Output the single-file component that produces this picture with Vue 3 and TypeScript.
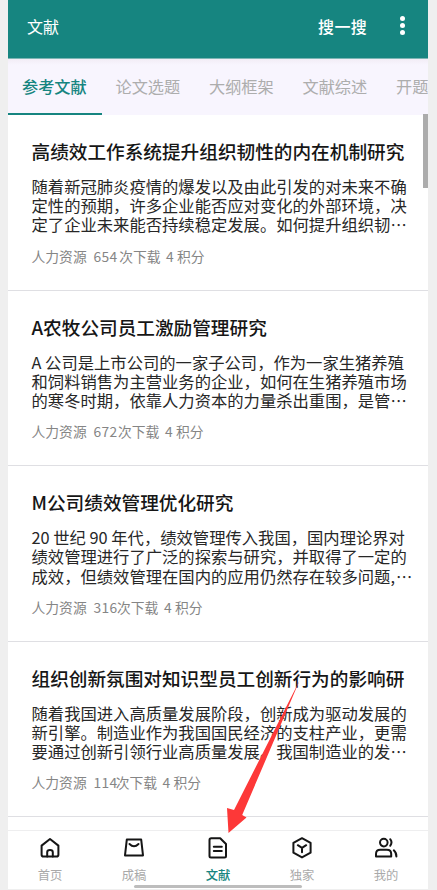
<script setup lang="ts">
interface Paper {
  title: string
  lines: string[]
  category: string
  downloads: string
  countWidth: number
  points: string
}

const tabs: string[] = ['参考文献', '论文选题', '大纲框架', '文献综述', '开题']

const papers: Paper[] = [
  {
    title: '高绩效工作系统提升组织韧性的内在机制研究',
    lines: [
      '随着新冠肺炎疫情的爆发以及由此引发的对未来不确',
      '定性的预期，许多企业能否应对变化的外部环境，决',
      '定了企业未来能否持续稳定发展。如何提升组织韧⋯',
    ],
    category: '人力资源',
    downloads: '654',
    countWidth: 25.7,
    points: '4',
  },
  {
    title: 'A农牧公司员工激励管理研究',
    lines: [
      'A 公司是上市公司的一家子公司，作为一家生猪养殖',
      '和饲料销售为主营业务的企业，如何在生猪养殖市场',
      '的寒冬时期，依靠人力资本的力量杀出重围，是管⋯',
    ],
    category: '人力资源',
    downloads: '672',
    countWidth: 24.5,
    points: '4',
  },
  {
    title: 'M公司绩效管理优化研究',
    lines: [
      '20 世纪 90 年代，绩效管理传入我国，国内理论界对',
      '绩效管理进行了广泛的探索与研究，并取得了一定的',
      '成效，但绩效管理在国内的应用仍然存在较多问题,\u200a⋯',
    ],
    category: '人力资源',
    downloads: '316',
    countWidth: 23.5,
    points: '4',
  },
  {
    title: '组织创新氛围对知识型员工创新行为的影响研',
    lines: [
      '随着我国进入高质量发展阶段，创新成为驱动发展的',
      '新引擎。制造业作为我国国民经济的支柱产业，更需',
      '要通过创新引领行业高质量发展。我国制造业的发⋯',
    ],
    category: '人力资源',
    downloads: '114',
    countWidth: 22.2,
    points: '4',
  },
]

const nav: { label: string; icon: string[]; active?: boolean }[] = [
  {
    label: '首页',
    icon: [
      'M2.6 8.6 11 2 19.4 8.6V17.8Q19.4 19.6 17.6 19.6H4.4Q2.6 19.6 2.6 17.8Z',
      'M8.2 19.6V15.3Q8.2 13.1 11 13.1T13.8 15.3V19.6',
    ],
  },
  { label: '成稿', icon: ['M3.8 2.6H18.2L20 18.4H2Z', 'M6.5 7Q11 11.4 15.5 7'] },
  {
    label: '文献',
    active: true,
    icon: [
      'M4.3 1.2H13.2L19 7V19Q19 20.5 17.5 20.5H4Q2.5 20.5 2.5 19V3Q2.5 1.2 4.3 1.2Z',
      'M6.8 9.8H14.8M6.8 14H14.8',
    ],
  },
  {
    label: '独家',
    icon: ['M11 1.2 19.6 5.9V15.7L11 20.4 2.4 15.7V5.9Z', 'M6.8 8.2 11 10.8 15.2 8.2M11 10.8V15.2'],
  },
  {
    label: '我的',
    icon: [
      'M8.8 1.8A3.8 3.8 0 1 1 8.8 9.4A3.8 3.8 0 1 1 8.8 1.8Z',
      'M1 19.6V17Q1 12.7 5.3 12.7H11.9Q16.2 12.7 16.2 17V19.6Z',
      'M15.2 2.2Q17.8 5.4 15.2 8.8M18.8 13.3Q21.4 15.6 21.4 19.4',
    ],
  },
]
</script>

<template>
  <div class="screen">
    <div class="phone">
      <header class="bar">
        <h1>文献</h1>
        <span class="search">搜一搜</span>
        <span class="more"><i /><i /><i /></span>
      </header>

      <nav class="tabs">
        <span v-for="(tab, i) in tabs" :key="tab" class="tab" :class="{ active: i === 0 }">{{ tab }}</span>
      </nav>

      <main class="list">
        <article v-for="paper in papers" :key="paper.title" class="paper">
          <h2>{{ paper.title }}</h2>
          <div class="summary">
            <p v-for="line in paper.lines" :key="line">{{ line }}</p>
          </div>
          <div class="meta">
            <span class="category">{{ paper.category }}</span>
            <span class="count" :style="{ width: paper.countWidth + 'px' }">{{ paper.downloads }}</span>
            <span class="downloads">次下载</span>
            <span class="points">{{ paper.points }}</span>
            <span>积分</span>
          </div>
        </article>
        <div class="scrollbar" />
      </main>

      <footer class="bottom">
        <div v-for="item in nav" :key="item.label" class="item" :class="{ active: item.active }">
          <svg viewBox="0 0 22 22" width="22" height="22">
            <path v-for="d in item.icon" :key="d" :d="d" />
          </svg>
          <span>{{ item.label }}</span>
        </div>
        <div class="handle" />
      </footer>

      <svg class="arrow" viewBox="0 0 84 160" width="84" height="160">
        <path d="M79.8 5 14 135 7 133 8.5 158 26.5 142.5 22.2 140Z" />
      </svg>
    </div>
  </div>
</template>

<style>
body {
  margin: 0;
  background: #efefef;
}
</style>

<style scoped>
.screen {
  height: 890px;
  box-sizing: border-box;
  padding: 0 9px 0 8px;
  background: #efefef;
  overflow: hidden;
  font-family: 'Noto Sans CJK SC', sans-serif;
}
.phone {
  position: relative;
  width: 420px;
  height: 889px;
  display: flex;
  flex-direction: column;
  background: #fff;
  overflow: hidden;
}
.bar {
  flex: none;
  height: 59px;
  box-sizing: border-box;
  padding: 0 23px 7px 19px;
  display: flex;
  align-items: center;
  background: #168580;
  border-bottom: 1px solid #7db5b4;
  color: #fff;
  font-size: 16px;
}
h1 {
  margin: 0;
  font-size: 16px;
  font-weight: 400;
  flex: 1;
}
.search {
  font-weight: 500;
  letter-spacing: 0.3px;
}
.more {
  display: flex;
  flex-direction: column;
  gap: 2px;
  margin-left: 33px;
}
.more i {
  width: 5px;
  height: 5px;
  border-radius: 50%;
  background: #fff;
}
.tabs {
  flex: none;
  height: 56px;
  display: flex;
  background: linear-gradient(#f2ecf5, #f8f5fe 6px);
  white-space: nowrap;
}
.tab {
  flex: none;
  width: 93.5px;
  box-sizing: border-box;
  padding-left: 14px;
  line-height: 55px;
  height: 56px;
  font-size: 16.2px;
  color: #adadad;
}
.tab.active {
  font-weight: 500;
  color: #168580;
  border-bottom: 2px solid #168580;
}
.list {
  position: relative;
  flex: 1;
}
.paper {
  height: 175.6px;
  box-sizing: border-box;
  padding: 21px 0 0 23.5px;
  border-bottom: 1px solid #dfdfe3;
  white-space: nowrap;
}
h2 {
  margin: 0;
  font-size: 18.65px;
  line-height: 30px;
  font-weight: 500;
  color: #161616;
}
.summary {
  margin-top: 11px;
  color: #272727;
  font-size: 16.32px;
}
p {
  margin: 0;
  line-height: 19.2px;
}
.meta {
  display: flex;
  margin-top: 11px;
  font-size: 13.8px;
  line-height: 20px;
  color: #858585;
}
.category {
  width: 62px;
}
.count {
  letter-spacing: 0.3px;
}
.downloads {
  margin-right: 5.5px;
}
.points {
  width: 11px;
}
.scrollbar {
  position: absolute;
  right: 0;
  top: -1px;
  width: 5px;
  height: 74px;
  background: #acacac;
}
.bottom {
  position: relative;
  flex: none;
  height: 59px;
  box-sizing: border-box;
  display: flex;
  background: #fff;
  border-top: 1px solid #eeeeef;
}
.item {
  flex: 1;
  display: flex;
  flex-direction: column;
  align-items: center;
  padding-top: 6px;
  color: #a9a9a9;
  font-size: 12.3px;
  line-height: 18px;
}
.item svg {
  overflow: visible;
  margin-bottom: 7px;
  fill: none;
  stroke: #151515;
  stroke-width: 2;
  stroke-linecap: round;
  stroke-linejoin: round;
}
.item.active {
  color: #168580;
  font-weight: 500;
}
.handle {
  position: absolute;
  left: 126px;
  bottom: 1px;
  width: 168px;
  height: 3px;
  border-radius: 2px;
  background: #bdbdbd;
}
.arrow {
  position: absolute;
  left: 212px;
  top: 675px;
  fill: #fd3838;
}
</style>
